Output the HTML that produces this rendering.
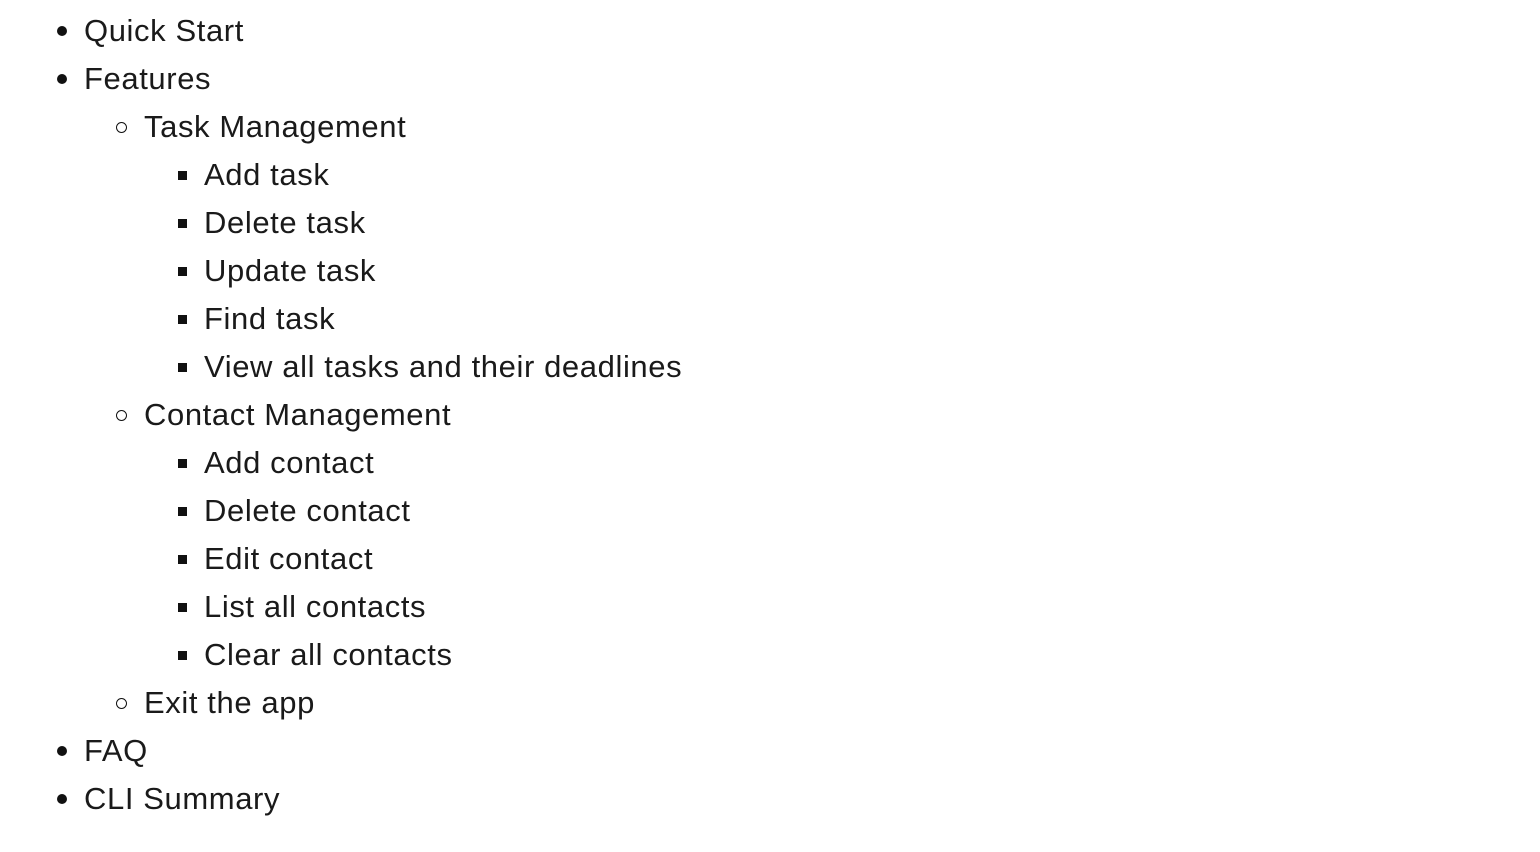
<!DOCTYPE html>
<html><head><meta charset="utf-8"><style>
html,body{margin:0;padding:0;background:#fff;}
body{font-family:"Liberation Sans",Arial,sans-serif;font-size:31px;letter-spacing:0.6px;color:#1a1a1a;padding-top:7px;}
.i{position:relative;height:48px;line-height:48px;white-space:nowrap;}
.l1{padding-left:84px}.l2{padding-left:144px}.l3{padding-left:204px}
.i::before{content:"";position:absolute;top:50%;}
.l1::before{left:57px;width:10px;height:10px;margin-top:-5px;border-radius:50%;background:#111;}
.l2::before{left:116px;width:9px;height:9px;margin-top:-5px;border-radius:50%;border:1.5px solid #111;}
.l3::before{left:178px;width:9px;height:9px;margin-top:-4px;background:#111;}
</style></head><body>
<div class="i l1">Quick Start</div>
<div class="i l1">Features</div>
<div class="i l2">Task Management</div>
<div class="i l3">Add task</div>
<div class="i l3">Delete task</div>
<div class="i l3">Update task</div>
<div class="i l3">Find task</div>
<div class="i l3">View all tasks and their deadlines</div>
<div class="i l2">Contact Management</div>
<div class="i l3">Add contact</div>
<div class="i l3">Delete contact</div>
<div class="i l3">Edit contact</div>
<div class="i l3">List all contacts</div>
<div class="i l3">Clear all contacts</div>
<div class="i l2">Exit the app</div>
<div class="i l1">FAQ</div>
<div class="i l1">CLI Summary</div>
</body></html>
